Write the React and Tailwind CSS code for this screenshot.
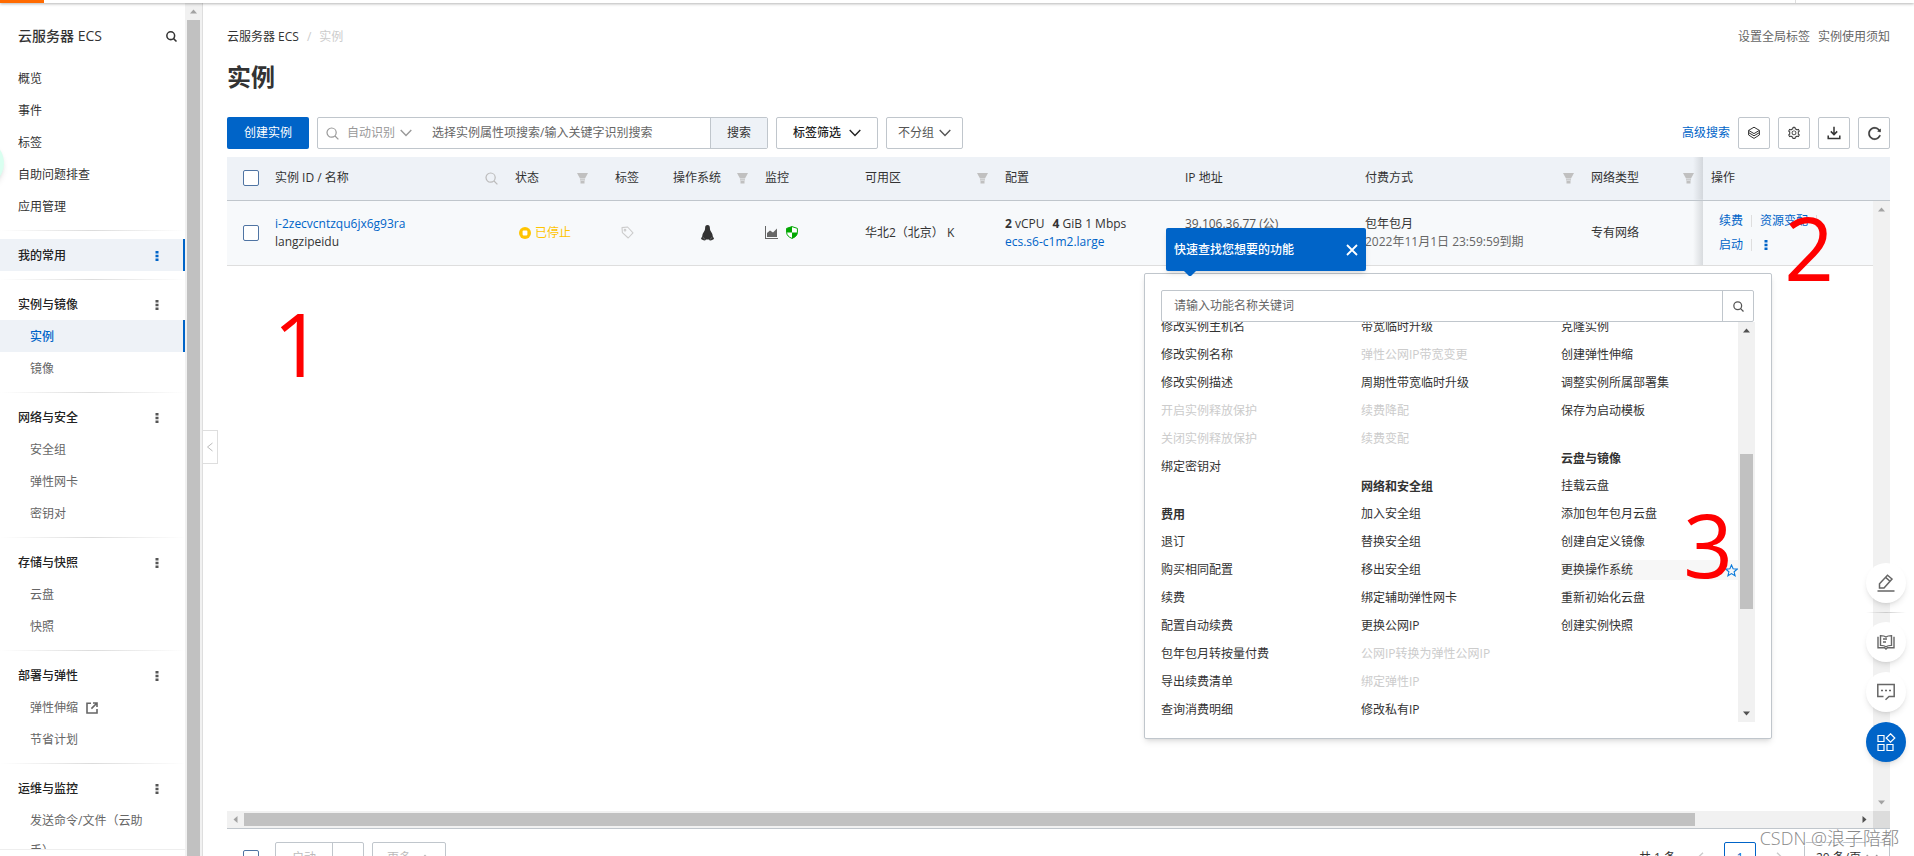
import clsx from "clsx";
import { AiOutlineReload, AiOutlineSetting } from "react-icons/ai";

const NAV_TOP = ["概览", "事件", "标签", "自助问题排查", "应用管理"];

const NAV_GROUPS = [
	{ title: "我的常用", active: true, items: [] },
	{ title: "实例与镜像", items: [{ name: "实例", active: true }, { name: "镜像" }] },
	{ title: "网络与安全", items: [{ name: "安全组" }, { name: "弹性网卡" }, { name: "密钥对" }] },
	{ title: "存储与快照", items: [{ name: "云盘" }, { name: "快照" }] },
	{ title: "部署与弹性", items: [{ name: "弹性伸缩", external: true }, { name: "节省计划" }] },
	{ title: "运维与监控", items: [{ name: "发送命令/文件（云助手）" }] },
];

const MENU_COLUMNS = [
	[
		{
			items: [
				{ name: "修改实例主机名" },
				{ name: "修改实例名称" },
				{ name: "修改实例描述" },
				{ name: "开启实例释放保护", disabled: true },
				{ name: "关闭实例释放保护", disabled: true },
				{ name: "绑定密钥对" },
			],
		},
		{
			title: "费用",
			items: [
				{ name: "退订" },
				{ name: "购买相同配置" },
				{ name: "续费" },
				{ name: "配置自动续费" },
				{ name: "包年包月转按量付费" },
				{ name: "导出续费清单" },
				{ name: "查询消费明细" },
			],
		},
	],
	[
		{
			items: [
				{ name: "带宽临时升级" },
				{ name: "弹性公网IP带宽变更", disabled: true },
				{ name: "周期性带宽临时升级" },
				{ name: "续费降配", disabled: true },
				{ name: "续费变配", disabled: true },
			],
		},
		{
			title: "网络和安全组",
			items: [
				{ name: "加入安全组" },
				{ name: "替换安全组" },
				{ name: "移出安全组" },
				{ name: "绑定辅助弹性网卡" },
				{ name: "更换公网IP" },
				{ name: "公网IP转换为弹性公网IP", disabled: true },
				{ name: "绑定弹性IP", disabled: true },
				{ name: "修改私有IP" },
			],
		},
	],
	[
		{
			items: [
				{ name: "克隆实例" },
				{ name: "创建弹性伸缩" },
				{ name: "调整实例所属部署集" },
				{ name: "保存为启动模板" },
			],
		},
		{
			title: "云盘与镜像",
			items: [
				{ name: "挂载云盘" },
				{ name: "添加包年包月云盘" },
				{ name: "创建自定义镜像" },
				{ name: "更换操作系统", hovered: true },
				{ name: "重新初始化云盘" },
				{ name: "创建实例快照" },
			],
		},
	],
];

const SearchIcon = ({ size = 13, width = 1.2, className }) => (
	<svg width={size} height={size} viewBox="0 0 13 13" fill="none" stroke="currentColor" strokeWidth={width} className={clsx("shrink-0", className)}>
		<circle cx="5.6" cy="5.6" r="4.6" />
		<path d="M9 9l3.4 3.4" />
	</svg>
);

const Chevron = ({ className }) => (
	<svg width="12" height="8" viewBox="0 0 12 8" fill="none" stroke="currentColor" strokeWidth="1.4" className={clsx("shrink-0", className)}>
		<path d="M.7 1L6 6.5 11.3 1" />
	</svg>
);

const FilterIcon = () => (
	<svg width="11" height="11" viewBox="0 0 11 11" fill="#c0c0c0" className="shrink-0">
		<path d="M0 0h11L8 5.600H3z" />
		<path d="M3 6.200h5v1.200H3zM3.500 8h4v2.600h-4z" />
	</svg>
);

const Dots = ({ className }) => (
	<svg width="4" height="12" viewBox="0 0 4 12" fill="currentColor" className={clsx("shrink-0", className)}>
		<path d="M.5 1h3v2.4h-3zM.5 4.8h3v2.4h-3zM.5 8.6h3V11h-3z" />
	</svg>
);

const Arrow = ({ dir, dark }) => {
	const paths = {
		up: "M5 10.5l3.5-4 3.5 4z",
		down: "M5 6.5l3.5 4 3.5-4z",
		left: "M10.5 5l-4 3.5 4 3.5z",
		right: "M6.5 5l4 3.5-4 3.5z",
	};
	return (
		<svg width="17" height="17" viewBox="0 0 17 17" fill={dark ? "#505050" : "#a3a3a3"} className="shrink-0">
			<path d={paths[dir]} />
		</svg>
	);
};

const ExternalIcon = () => (
	<svg width="12" height="12" viewBox="0 0 12 12" fill="none" stroke="#666" strokeWidth="1.6">
		<path d="M5 1.2H1v9.8h10V7" />
		<path d="M7 1h4v4M11 1L5.4 6.6" />
	</svg>
);

const LayersIcon = () => (
	<svg width="14" height="14" viewBox="0 0 14 14" fill="none" stroke="currentColor" strokeWidth="1">
		<path d="M7 1.2l5.4 3.2L7 7.6 1.6 4.4z" />
		<path d="M1.6 6.6L7 9.8l5.4-3.2M1.6 9L7 12.4 12.4 9M1.6 4.4V9M12.4 4.4V9" />
	</svg>
);

const DownloadIcon = () => (
	<svg width="14" height="14" viewBox="0 0 14 14" fill="none" stroke="currentColor" strokeWidth="1.5">
		<path d="M7 .8v7.6M3.8 5.4L7 8.6l3.2-3.2M1.2 9.4v3h11.6v-3" />
	</svg>
);

const StoppedIcon = () => (
	<svg width="12" height="12" viewBox="0 0 12 12" className="shrink-0">
		<circle cx="6" cy="6" r="6" fill="#ffc400" />
		<rect x="3.6" y="3.6" width="4.8" height="4.8" rx=".8" fill="#fff" />
	</svg>
);

const TagIcon = () => (
	<svg width="13" height="13" viewBox="0 0 13 13" fill="none" stroke="#ccc" strokeWidth="1.1">
		<path d="M1 1.6L6.6 1 12 6.8 7.2 12 1.4 6.6z" strokeLinejoin="round" />
		<circle cx="4" cy="4.2" r=".8" />
	</svg>
);

const LinuxIcon = () => (
	<svg width="13" height="16" viewBox="0 0 13 16" fill="#333" className="mx-auto">
		<path d="M6.500 0C8.200 0 8.900 1.200 8.900 3c0 1.700.500 2.700 1.300 4 .900 1.400 1.600 2.700 1.500 4.300l1.300 2.200c0 .900-2.400 2-3.600 2-.800 0-1.200-.400-1.500-.900H5.100c-.300.500-.700.900-1.500.900C2.400 15.500 0 14.400 0 13.500l1.300-2.200c-.100-1.600.600-2.900 1.500-4.300C3.600 5.700 4.100 4.700 4.100 3c0-1.800.700-3 2.400-3z" />
		<path d="M2 12.200l2 2.400M11 12.200l-2 2.400" stroke="#888" strokeWidth=".7" />
	</svg>
);

const ChartIcon = () => (
	<svg width="13" height="13" viewBox="0 0 13 13" fill="#666">
		<path d="M0 0h1v12h12v1H0z" />
		<path d="M2 11V7l3-2.6L8 6.6l4-4V11z" />
	</svg>
);

const ShieldIcon = () => (
	<svg width="12" height="13" viewBox="0 0 12 13">
		<path d="M6 .6l5.4 1.8v3.8c0 3-2.2 5-5.4 6.2C2.800 11.200.600 9.200.600 6.200V2.400z" fill="#fff" stroke="#00a700" strokeWidth="1" />
		<path d="M6 .6V6.400H.600V2.400zM6 6.400h5.400c0 3-2.200 4.800-5.400 6z" fill="#00a700" />
	</svg>
);

const StarIcon = () => (
	<svg width="13" height="13" viewBox="0 0 13 13" fill="none" stroke="#0a7adb" strokeWidth="1.1" className="shrink-0">
		<path d="M6.500 1l1.600 3.800 4.100.300-3.100 2.700 1 4-3.600-2.200-3.600 2.200 1-4L.800 5.100l4.100-.300z" />
	</svg>
);

const Sidebar = () => (
	<aside className="flex w-[203px] shrink-0 border-r border-[#dedede]">
		<div className="flex min-w-0 flex-1 flex-col">
			<nav className="min-h-0 flex-1 overflow-hidden">
				<div className="mt-4 mb-[11px] flex h-8 items-center justify-between pt-0.5 pr-2 pl-[18px]">
					<span className="text-sm font-medium text-[#333]">云服务器 ECS</span>
					<button type="button" aria-label="搜索" className="text-[#333]">
						<SearchIcon size={11} width={1.8} />
					</button>
				</div>
				{NAV_TOP.map(name => (
					<a key={name} href="#" className="flex h-8 items-center pt-0.5 pl-[18px] text-[#333]">{name}</a>
				))}
				{NAV_GROUPS.map(group => (
					<section key={group.title} className="mt-2">
						<hr className="mb-2 h-px border-0 bg-linear-to-r from-transparent via-[#dcdcdc] to-transparent" />
						<div className={clsx("flex h-8 items-center justify-between pt-0.5 pl-[18px] font-medium text-[#222]", group.active ? "border-r-2 border-[#0064c8] bg-[#eef2f7] pr-6" : "pr-[26px]")}>
							<span>{group.title}</span>
							<button type="button" aria-label={group.title + "更多"}>
								<Dots className={group.active ? "text-[#0064c8]" : "text-[#555]"} />
							</button>
						</div>
						{group.items.map(item => (
							<a
								key={item.name}
								href="#"
								className={clsx("flex min-h-8 items-center gap-2 pt-0.5 pr-9 pl-[30px] leading-[30px]", item.active ? "border-r-2 border-[#0064c8] bg-[#eef2f7] font-medium text-[#0064c8]" : "text-[#666]")}
							>
								{item.name}
								{item.external && <ExternalIcon />}
							</a>
						))}
					</section>
				))}
			</nav>
			<div className="h-[7px] shrink-0 border-t border-[#eee] bg-white" />
		</div>
		<div className="flex w-[17px] flex-col bg-[#f1f1f1]">
			<Arrow dir="up" />
			<div className="mx-0.5 flex-1 bg-[#c1c1c1]" />
		</div>
	</aside>
);

const Toolbar = () => (
	<div className="mt-6 flex h-8 items-stretch gap-2">
		<button type="button" className="w-[82px] rounded-xs bg-[#0064c8] text-white">创建实例</button>
		<div className="flex w-[451px] rounded-xs border border-[#c0c6cc]">
			<label className="flex items-center gap-1 pl-2 text-[#999]">
				<SearchIcon />
				<select aria-label="搜索类型" className="ml-1 appearance-none bg-transparent">
					<option>自动识别</option>
				</select>
				<Chevron />
			</label>
			<input type="text" aria-label="搜索实例" placeholder="选择实例属性项搜索/输入关键字识别搜索" className="ml-5 min-w-0 flex-1 outline-none placeholder:text-[#666]" />
			<button type="button" className="w-[57px] border-l border-[#c0c6cc] bg-[#eef2f7] text-[#333]">搜索</button>
		</div>
		<button type="button" className="flex w-[102px] items-center justify-center gap-2 rounded-xs border border-[#c0c6cc] font-medium text-[#222]">
			标签筛选
			<Chevron />
		</button>
		<label className="flex w-[77px] items-center justify-center gap-1 rounded-xs border border-[#c0c6cc] text-[#555]">
			<select aria-label="分组" className="appearance-none bg-transparent">
				<option>不分组</option>
			</select>
			<Chevron />
		</label>
		<div className="ml-auto flex items-center gap-2 text-[#333]">
			<a href="#" className="text-[#0064c8]">高级搜索</a>
			<button type="button" aria-label="资源组" className="flex size-8 items-center justify-center rounded-xs border border-[#c0c6cc]"><LayersIcon /></button>
			<button type="button" aria-label="设置" className="flex size-8 items-center justify-center rounded-xs border border-[#c0c6cc]"><AiOutlineSetting size={14} /></button>
			<button type="button" aria-label="导出" className="flex size-8 items-center justify-center rounded-xs border border-[#c0c6cc]"><DownloadIcon /></button>
			<button type="button" aria-label="刷新" className="flex size-8 items-center justify-center rounded-xs border border-[#c0c6cc]"><AiOutlineReload size={15} strokeWidth={40} /></button>
		</div>
	</div>
);

const Columns = ({ last }) => (
	<colgroup>
		<col className="w-10" />
		<col className="w-60" />
		<col className="w-[90px]" />
		<col className="w-[60px]" />
		<col className="w-[100px]" />
		<col className="w-[100px]" />
		<col className="w-[140px]" />
		<col className="w-[180px]" />
		<col className="w-[180px]" />
		<col />
		<col className="w-[120px]" />
		<col className={last} />
	</colgroup>
);

const Th = ({ children, icon, className }) => (
	<th className={clsx("pr-[9px] font-normal", className || "pl-2")}>
		<div className="flex items-center justify-between">
			<span>{children}</span>
			{icon}
		</div>
	</th>
);

const Checkbox = ({ label }) => (
	<input type="checkbox" aria-label={label} className="block size-4 shrink-0 appearance-none rounded-xs border border-[#4f74a3] bg-white" />
);

const Separator = () => <span className="mx-2 h-3 w-px bg-[#dedede]" />;

const InstanceTable = () => (
	<div className="mt-2 flex min-h-0 flex-1 flex-col border-b border-[#c0c6cc] text-[#333]">
		<table className="w-full table-fixed text-left">
			<Columns last="w-[187px]" />
			<thead>
				<tr className="h-[43px] border-b border-[#c0c6cc] bg-[#eef2f7]">
					<th className="pl-4"><Checkbox label="全选" /></th>
					<Th icon={<SearchIcon className="text-[#bbb]" />}>实例 ID / 名称</Th>
					<Th icon={<FilterIcon />}>状态</Th>
					<th className="text-center font-normal">标签</th>
					<Th icon={<FilterIcon />} className="pl-4">操作系统</Th>
					<Th>监控</Th>
					<Th icon={<FilterIcon />}>可用区</Th>
					<Th>配置</Th>
					<Th>IP 地址</Th>
					<Th icon={<FilterIcon />}>付费方式</Th>
					<Th icon={<FilterIcon />} className="bg-linear-to-l from-[#d3d7dc] to-transparent bg-[length:10px_100%] bg-right bg-no-repeat pl-2">网络类型</Th>
					<Th>操作</Th>
				</tr>
			</thead>
		</table>
		<div className="flex min-h-0 flex-1">
			<div className="min-w-0 flex-1">
				<table className="w-full table-fixed text-left leading-[18px]">
					<Columns last="w-[170px]" />
					<tbody>
						<tr className="h-[65px] border-b border-[#dedede] bg-[#f7f9fb]">
							<td className="pl-4"><Checkbox label="选择实例" /></td>
							<td className="px-2">
								<a href="#" className="block text-[#0064c8]">i-2zecvcntzqu6jx6g93ra</a>
								<span>langzipeidu</span>
							</td>
							<td className="px-3">
								<span className="flex items-center gap-1 text-[#ffc400]"><StoppedIcon />已停止</span>
							</td>
							<td><span className="flex justify-center"><TagIcon /></span></td>
							<td><LinuxIcon /></td>
							<td className="px-2"><span className="flex gap-2"><ChartIcon /><ShieldIcon /></span></td>
							<td className="px-2">华北2（北京） K</td>
							<td className="px-2">
								<div className="flex gap-2">
									<span><b>2</b> vCPU</span>
									<span><b>4</b> GiB 1 Mbps</span>
								</div>
								<a href="#" className="block text-[#0064c8]">ecs.s6-c1m2.large</a>
							</td>
							<td className="px-2 pt-[14px] align-top text-[#555]">39.106.36.77 (公)</td>
							<td className="px-2">
								<div>包年包月</div>
								<div className="whitespace-nowrap text-[#666]">2022年11月1日 23:59:59到期</div>
							</td>
							<td className="bg-linear-to-l from-[#d8dbde] to-transparent bg-[length:10px_100%] bg-right bg-no-repeat px-2">专有网络</td>
							<td className="px-4 leading-6 text-[#0064c8]">
								<div className="flex items-center">
									<a href="#">续费</a>
									<Separator />
									<a href="#">资源变配</a>
									<Separator />
								</div>
								<div className="flex items-center">
									<a href="#">启动</a>
									<Separator />
									<button type="button" aria-label="更多操作" className="ml-1"><Dots /></button>
								</div>
							</td>
						</tr>
					</tbody>
				</table>
			</div>
			<div className="flex w-[17px] flex-col justify-between bg-[#f1f1f1]">
				<Arrow dir="up" />
				<Arrow dir="down" />
			</div>
		</div>
		<div className="flex h-[17px] bg-[#f1f1f1]">
			<Arrow dir="left" />
			<div className="flex-1 py-0.5">
				<div className="h-full w-[90%] bg-[#c1c1c1]" />
			</div>
			<Arrow dir="right" dark />
			<div className="w-[17px] bg-[#dcdcdc]" />
		</div>
	</div>
);

const TableFooter = () => (
	<div className="flex h-[27px] shrink-0 items-start overflow-hidden pt-[13px]">
		<div className="flex h-8 shrink-0 items-center pl-4"><Checkbox label="全选本页" /></div>
		<div className="ml-4 flex h-8 shrink-0 rounded-xs border border-[#c0c6cc] text-[#bbb]">
			<button type="button" className="w-14">启动</button>
			<button type="button" aria-label="展开" className="w-[31px] border-l border-[#c0c6cc]" />
		</div>
		<button type="button" className="ml-2 flex h-8 w-[74px] shrink-0 items-center justify-center gap-2 rounded-xs border border-[#c0c6cc] text-[#bbb]">
			更多
			<Chevron className="rotate-180" />
		</button>
		<div className="ml-auto flex h-8 shrink-0 items-center text-[#333]">
			<span>共 1 条</span>
			<button type="button" aria-label="上一页" className="w-12 text-[#ccc]"><Chevron className="mx-auto rotate-90" /></button>
			<button type="button" className="size-8 rounded-xs border border-[#0064c8] text-[#0064c8]">1</button>
			<button type="button" aria-label="下一页" className="w-12 text-[#ccc]"><Chevron className="mx-auto -rotate-90" /></button>
			<label className="flex h-8 w-[86px] items-center justify-center gap-1 rounded-xs border border-[#c0c6cc]">
				<select aria-label="每页条数" className="appearance-none bg-transparent">
					<option>20 条/页</option>
				</select>
				<Chevron className="text-[#999]" />
			</label>
		</div>
	</div>
);

const QuickTip = () => (
	<div className="absolute -top-[46px] left-[21px] flex h-[43px] w-[200px] items-center justify-between rounded-xs bg-[#0064c8] px-2 font-medium text-white shadow-md">
		快速查找您想要的功能
		<button type="button" aria-label="关闭">
			<svg width="12" height="12" viewBox="0 0 12 12" fill="none" stroke="#fff" strokeWidth="1.8">
				<path d="M1 1l10 10M11 1L1 11" />
			</svg>
		</button>
		<svg width="12" height="6" viewBox="0 0 12 6" fill="#0064c8" className="absolute top-full left-[18px]">
			<path d="M0 0h12L7 5H5z" />
		</svg>
	</div>
);

const ActionMenu = () => (
	<div className="absolute top-[270px] right-[142px] w-[628px] rounded-xs border border-[#c0c6cc] bg-white p-4 text-[#333] shadow-md">
		<QuickTip />
		<div className="mr-px flex h-8 rounded-xs border border-[#c0c6cc]">
			<input type="text" aria-label="功能名称" placeholder="请输入功能名称关键词" className="min-w-0 flex-1 px-3 outline-none placeholder:text-[#666]" />
			<button type="button" aria-label="搜索功能" className="flex w-[31px] items-center justify-center border-l border-[#c0c6cc] text-[#555]">
				<SearchIcon size={11} width={1.5} />
			</button>
		</div>
		<div className="flex h-[400px]">
			<div className="flex min-w-0 flex-1 flex-col justify-end overflow-hidden pb-0.5">
				<div className="flex items-start">
					{MENU_COLUMNS.map((groups, index) => (
						<div key={index} className={clsx("flex flex-col gap-7", index < 2 ? "w-[200px] shrink-0" : "min-w-0 flex-1")}>
							{groups.map(group => (
								<div key={group.items[0].name} className="flex flex-col gap-2">
									{group.title && <div className="h-[19px] leading-5 font-bold">{group.title}</div>}
									{group.items.map(item => (
										<button
											key={item.name}
											type="button"
											disabled={item.disabled}
											className={clsx("flex h-5 items-center justify-between overflow-hidden text-left", item.disabled && "text-[#ccc]", item.hovered && "bg-[#f7f7f7]")}
										>
											{item.name}
											{item.hovered && <StarIcon />}
										</button>
									))}
								</div>
							))}
						</div>
					))}
				</div>
			</div>
			<div className="flex w-[17px] flex-col bg-[#f1f1f1]">
				<Arrow dir="up" dark />
				<div className="flex flex-1 flex-col px-0.5">
					<div className="h-[115px]" />
					<div className="h-[155px] bg-[#c1c1c1]" />
				</div>
				<Arrow dir="down" dark />
			</div>
		</div>
	</div>
);

const FloatingTools = () => (
	<div className="fixed right-2 bottom-[94px] flex flex-col gap-[10px] text-[#666]">
		<button type="button" aria-label="备注" className="flex size-10 items-center justify-center rounded-full bg-white shadow-md">
			<svg width="18" height="18" viewBox="0 0 18 18" fill="none" stroke="currentColor" strokeWidth="1.5">
				<path d="M2.500 14V9.800L10.500 1.200 15 5 7 14zM8.600 3.400l4.400 3.800M.500 17h17" />
			</svg>
		</button>
		<hr className="-my-px h-px border-0 bg-linear-to-r from-transparent via-[#ccc] to-transparent" />
		<button type="button" aria-label="文档" className="flex size-10 items-center justify-center rounded-full bg-white shadow-md">
			<svg width="18" height="16" viewBox="0 0 18 16" fill="none" stroke="currentColor" strokeWidth="1.4">
				<path d="M9 3C7.500 1.800 5.500 1.600 3.500 1.600v9.800c2 0 4 .200 5.500 1.400 1.500-1.200 3.500-1.400 5.500-1.400V1.600C12.500 1.600 10.500 1.800 9 3z" />
				<path d="M1 2.800v11h6.500L9 15l1.500-1.200H17v-11M6 5h4M6 8h3" />
			</svg>
		</button>
		<button type="button" aria-label="反馈" className="flex size-10 items-center justify-center rounded-full bg-white shadow-md">
			<svg width="18" height="18" viewBox="0 0 18 18" fill="none" stroke="currentColor" strokeWidth="1.500">
				<path d="M6.500 13.500H.800V1.500h16.400v12H12l-3.500 3.200" />
				<path d="M4 7.500h2M8 7.500h2M12 7.500h2" />
			</svg>
		</button>
		<button type="button" aria-label="应用" className="flex size-10 items-center justify-center rounded-full bg-[#0064c8] text-white shadow-md">
			<svg width="20" height="18" viewBox="0 0 20 18" fill="none" stroke="currentColor" strokeWidth="1.200">
				<path d="M2 2.500h6v6H2zM2 11.500h6v6H2zM11 11.500h6v6h-6zM14.500.800L18.800 5l-4.300 4.200L10.200 5z" />
			</svg>
		</button>
	</div>
);

const App = () => (
	<div className="relative flex h-screen flex-col overflow-hidden bg-white font-['Open_Sans','Noto_Sans_CJK_SC',sans-serif] text-xs">
		<header className="z-10 flex h-[3px] shrink-0 justify-between bg-white shadow-[0_1px_3px_rgba(0,0,0,0.3)]">
			<div className="w-11 bg-[#ff6a00]" />
			<div className="w-[119px] border-l border-[#dedede]" />
		</header>

		<div className="flex min-h-0 flex-1">
			<Sidebar />
			<main className="relative flex min-w-0 flex-1 flex-col px-6 pt-6">
				<button type="button" aria-label="收起导航" className="absolute top-[427px] left-0 flex h-[34px] w-[15px] items-center justify-center border border-l-0 border-[#dedede] bg-white text-[#bbb]">
					<svg width="6" height="10" viewBox="0 0 6 10" fill="none" stroke="currentColor">
						<path d="M5.500 1l-5 4 5 4" />
					</svg>
				</button>
				<div className="flex justify-between leading-5">
					<div className="flex gap-2">
						<a href="#" className="text-[#333]">云服务器 ECS</a>
						<span className="text-[#ccc]">/</span>
						<span className="text-[#ccc]">实例</span>
					</div>
					<div className="flex gap-2 text-[#666]">
						<a href="#">设置全局标签</a>
						<a href="#">实例使用须知</a>
					</div>
				</div>
				<h1 className="mt-[14px] text-2xl font-bold text-[#333]">实例</h1>
				<Toolbar />
				<InstanceTable />
				<TableFooter />
				<ActionMenu />
			</main>
		</div>

		<FloatingTools />

		{/* assistant bubble tucked behind the left edge */}
		<div className="absolute top-[139px] -left-11 size-12 rounded-full bg-[#d9fff0] shadow-md" />

		{/* step marks */}
		<span className="absolute top-[300px] left-[273px] text-[87px] leading-none font-medium text-[#f00]">1</span>
		<span className="absolute top-[204px] right-[80px] text-[87px] leading-none font-medium text-[#f00]">2</span>
		<span className="absolute top-[501px] right-[181px] text-[87px] leading-none font-medium text-[#f00]">3</span>
		<span className="absolute right-[15px] bottom-[5px] text-lg leading-[26px] font-light text-[#888] text-shadow-[1px_1px_0_#fff]">CSDN @浪子陪都</span>
	</div>
);

export default App;
